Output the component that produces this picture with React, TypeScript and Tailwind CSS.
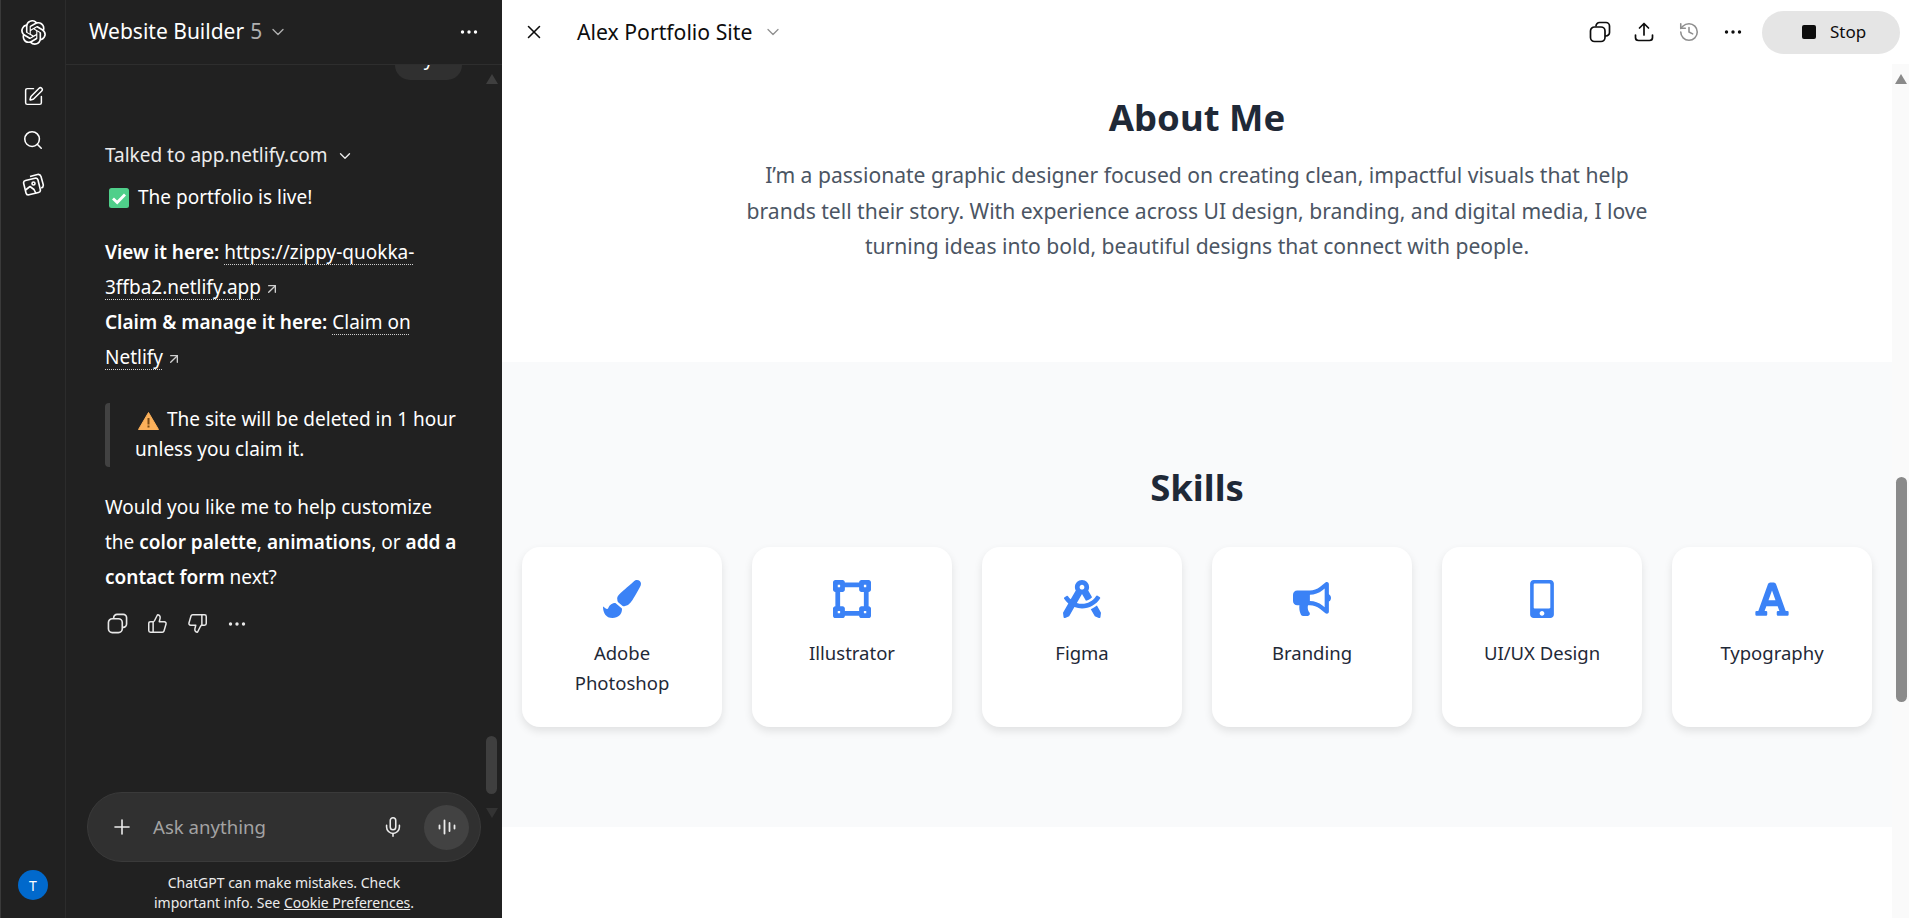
import React from "react";
import { ArrowUpRight, ChevronDown, History, Mic, Plus, Search, SquarePen, ThumbsDown, ThumbsUp, X } from "lucide-react";
import { FaBullhorn, FaDraftingCompass, FaFont, FaMobileAlt, FaPaintBrush, FaVectorSquare } from "react-icons/fa";
import { SiOpenai } from "react-icons/si";

const skills = [
  { name: "Adobe Photoshop", Icon: FaPaintBrush },
  { name: "Illustrator", Icon: FaVectorSquare },
  { name: "Figma", Icon: FaDraftingCompass },
  { name: "Branding", Icon: FaBullhorn },
  { name: "UI/UX Design", Icon: FaMobileAlt },
  { name: "Typography", Icon: FaFont },
];

function Dots() {
  return (
    <svg width="20" height="20" viewBox="0 0 20 20" fill="currentColor">
      <circle cx="3.5" cy="10" r="1.7" />
      <circle cx="10" cy="10" r="1.7" />
      <circle cx="16.5" cy="10" r="1.7" />
    </svg>
  );
}

function CopyIcon({ size = 22 }: { size?: number }) {
  return (
    <svg width={size} height={size} viewBox="0 0 22 22" fill="none" stroke="currentColor" strokeWidth="1.7">
      <rect x="1.5" y="6" width="14.5" height="14.5" rx="4" />
      <path d="M7 5.5V5a3.5 3.5 0 0 1 3.5-3.5H17A3.5 3.5 0 0 1 20.500 5v6.500A3.500 3.500 0 0 1 17 15h-1" />
    </svg>
  );
}

function ShareIcon() {
  return (
    <svg width="22" height="22" viewBox="0 0 22 22" fill="none" stroke="currentColor" strokeWidth="1.7" strokeLinecap="round" strokeLinejoin="round">
      <path d="M11 14V2.500M6.500 7 11 2.500 15.500 7" />
      <path d="M2.500 14v2.500a3 3 0 0 0 3 3h11a3 3 0 0 0 3-3V14" />
    </svg>
  );
}

function ImagesIcon() {
  return (
    <svg width="23" height="23" viewBox="0 0 23 23" fill="none" stroke="currentColor" strokeWidth="1.6" strokeLinejoin="round">
      <path d="M3.500 7.500 13 5.200a2.500 2.500 0 0 1 3 1.800l2.300 9.500a2.500 2.500 0 0 1-1.800 3L7 21.800a2.500 2.500 0 0 1-3-1.800L1.700 10.500a2.500 2.500 0 0 1 1.800-3Z" />
      <path d="M8 3.500 15.500 1.500a3 3 0 0 1 3.500 2l2.200 8a3 3 0 0 1-2 3.500" />
      <circle cx="11.500" cy="10.500" r="1.500" />
      <path d="M3.500 17 8 13.500l4 3 2 4" />
    </svg>
  );
}

function VoiceBars() {
  return (
    <svg width="20" height="20" viewBox="0 0 20 20" fill="none" stroke="currentColor" strokeWidth="1.8" strokeLinecap="round">
      <path d="M2.500 8.500v3M7.500 3.500v13M12.500 6v8M17.500 8.500v3" />
    </svg>
  );
}

function CheckEmoji() {
  return (
    <svg width="20" height="20" viewBox="0 0 20 20" className="shrink-0">
      <rect width="20" height="20" rx="2.500" fill="#4fcf8a" />
      <path d="M4 10.500 8.200 14.500 16 6.500" fill="none" stroke="#fff" strokeWidth="2.800" />
    </svg>
  );
}

function WarningEmoji() {
  return (
    <svg width="21" height="18" viewBox="0 0 21 18" className="inline-block ml-[3px]">
      <path d="M10.500 0.500 20.500 17.500H0.500Z" fill="#fbb05a" stroke="#fbb05a" strokeLinejoin="round" />
      <rect x="9.500" y="6" width="2" height="6.500" fill="#7a4a14" />
      <rect x="9.500" y="13.500" width="2" height="2" fill="#7a4a14" />
    </svg>
  );
}

function ChatLink({ children }: { children: React.ReactNode }) {
  return <span className="underline decoration-dotted decoration-1 underline-offset-[5px] decoration-[#cfcfcf]">{children}</span>;
}

function Rail() {
  return (
    <div className="w-[66px] shrink-0 flex flex-col items-center border-r border-[#2c2c2c] border-l border-l-[#3a3a3a] pb-[18px]">
      <div className="h-[64px] flex items-center justify-center">
        <SiOpenai size={25} />
      </div>
      <div className="mt-[22px] flex flex-col items-center gap-[22px]">
        <SquarePen size={21} strokeWidth={1.7} />
        <Search size={22} strokeWidth={1.7} />
        <ImagesIcon />
      </div>
      <div className="mt-auto w-[30px] h-[30px] rounded-full bg-[#0169cc] flex items-center justify-center text-[14px]">T</div>
    </div>
  );
}

function ChatPanel() {
  return (
    <div className="relative w-[436px] shrink-0 flex flex-col">
      <div className="h-[65px] shrink-0 flex items-center justify-between pl-[23px] pr-[23px] border-b border-[#2e2e2e] z-10 bg-[#212121]">
        <div className="flex items-center text-[21px]">
          <span>Website Builder</span>
          <span className="ml-[6px] text-[#afafaf]">5</span>
          <ChevronDown size={20} strokeWidth={1.6} className="ml-[6px] text-[#afafaf]" />
        </div>
        <Dots />
      </div>

      <div className="flex-1 overflow-hidden pl-[39px] pr-[20px] text-[19px] leading-[35px]">
        <div className="flex justify-end pr-[20px]">
          <div className="w-[67px] h-[15px] bg-[#303030] rounded-b-[20px] overflow-hidden flex justify-center">
            <span className="-mt-[19px] leading-[25px]">y</span>
          </div>
        </div>
        <div className="mt-[58px] flex items-center h-[35px] text-[#ececec]">
          Talked to app.netlify.com
          <ChevronDown size={18} strokeWidth={1.8} className="ml-[8px]" />
        </div>
        <div className="mt-[7px] flex items-center gap-[9px] h-[35px] pl-[4px]">
          <CheckEmoji />
          The portfolio is live!
        </div>
        <p className="mt-[20px]">
          <strong className="font-semibold">View it here:</strong> <ChatLink>https://zippy-quokka-<br />3ffba2.netlify.app</ChatLink>
          <ArrowUpRight size={16} strokeWidth={2} className="inline-block ml-[3px] text-[#cfcfcf]" />
          <br />
          <strong className="font-semibold">Claim &amp; manage it here:</strong> <ChatLink>Claim on<br />Netlify</ChatLink>
          <ArrowUpRight size={16} strokeWidth={2} className="inline-block ml-[3px] text-[#cfcfcf]" />
        </p>
        <blockquote className="mt-[28px] border-l-[5px] rounded-sm border-[#424242] pl-[25px] leading-[30px] pt-[1px] pb-[3px]">
          <WarningEmoji /> <span className="ml-[3px]">The site will be deleted in 1 hour</span>
          <br />
          unless you claim it.
        </blockquote>
        <p className="mt-[23px]">
          Would you like me to help customize
          <br />
          the <strong className="font-semibold">color palette</strong>, <strong className="font-semibold">animations</strong>, or <strong className="font-semibold">add a</strong>
          <br />
          <strong className="font-semibold">contact form</strong> next?
        </p>
        <div className="mt-[18px] flex items-center gap-[19px] pl-[2px] text-[#e8e8e8]">
          <CopyIcon size={21} />
          <ThumbsUp size={21} strokeWidth={1.7} />
          <ThumbsDown size={21} strokeWidth={1.7} />
          <Dots />
        </div>
      </div>

      <div className="pl-[21px] pr-[21px] pb-[5px] text-center text-[14px] leading-[20px] text-[#ececec]">
        <div className="h-[70px] rounded-full bg-[#303030] border border-[#3a3a3a] flex items-center pl-[22px] pr-[11px] mb-[11px]">
          <Plus size={24} strokeWidth={1.6} />
          <span className="ml-[19px] text-[18.6px] text-[#a3a3a3]">Ask anything</span>
          <Mic size={22} strokeWidth={1.7} className="ml-auto mr-[20px]" />
          <div className="w-[45px] h-[45px] rounded-full bg-[#424242] flex items-center justify-center">
            <VoiceBars />
          </div>
        </div>
        ChatGPT can make mistakes. Check
        <br />
        important info. See <span className="underline">Cookie Preferences</span>.
      </div>

      {/* native looking scrollbar over the chat */}
      <div className="absolute right-[4px] top-[74px] w-0 h-0 border-x-[6.500px] border-x-transparent border-b-[10px] border-b-[#3f3f3f]" />
      <div className="absolute right-[5px] top-[736px] w-[11px] h-[58px] rounded-md bg-[#3f3f3f]" />
      <div className="absolute right-[4px] top-[808px] w-0 h-0 border-x-[6.500px] border-x-transparent border-t-[10px] border-t-[#333333]" />
    </div>
  );
}

function PreviewPanel() {
  return (
    <div className="flex-1 min-w-0 bg-white text-[#0d0d0d] flex flex-col">
      <div className="h-[64px] shrink-0 flex items-center pl-[21px] pr-[9px]">
        <X size={22} strokeWidth={1.7} />
        <span className="ml-[32px] text-[21.2px] leading-none">Alex Portfolio Site</span>
        <ChevronDown size={20} strokeWidth={1.5} className="ml-[11px] text-[#8f8f8f]" />
        <div className="ml-auto flex items-center">
          <CopyIcon />
          <span className="ml-[22px]"><ShareIcon /></span>
          <History size={22} strokeWidth={1.7} className="ml-[23px] text-[#8f8f8f]" />
          <span className="ml-[23px]"><Dots /></span>
          <div className="ml-[19px] w-[138px] h-[43px] rounded-full bg-[#e5e5e5] flex items-center pl-[40px] text-[17px]">
            <div className="w-[14px] h-[14px] rounded-[2px] bg-[#0d0d0d]" />
            <span className="ml-[14px]">Stop</span>
          </div>
        </div>
      </div>

      <div className="flex-1 flex min-h-0">
        <div className="flex-1 min-w-0 overflow-hidden">
          <div className="h-[298px] pt-[27px] text-center">
            <h2 className="text-[36.5px] leading-[52px] font-bold text-[#1f2937]">About Me</h2>
            <p className="mt-[14px] text-[21.1px] leading-[35.500px] text-[#4b5563]">
              I’m a passionate graphic designer focused on creating clean, impactful visuals that help
              <br />
              brands tell their story. With experience across UI design, branding, and digital media, I love
              <br />
              turning ideas into bold, beautiful designs that connect with people.
            </p>
          </div>
          <section className="h-[465px] bg-[#f9fafb] pt-[99px] px-[20px]">
            <h2 className="text-[36.5px] leading-[52px] font-bold text-center text-[#1f2937]">Skills</h2>
            <div className="mt-[34px] grid grid-cols-6 gap-[30px]">
              {skills.map(({ name, Icon }) => (
                <div key={name} className="h-[180px] rounded-[18px] bg-white shadow-[0_4px_8px_rgba(0,0,0,0.1)] pt-[33px] px-[26px] flex flex-col items-center text-center text-[18.5px] leading-[30px] text-[#1f2937]">
                  <Icon size={38} className="text-[#3b82f6] shrink-0" />
                  <div className="mt-[20px]">{name}</div>
                </div>
              ))}
            </div>
          </section>
        </div>

        {/* page scrollbar */}
        <div className="relative w-[17px] shrink-0 bg-[#fafafa]">
          <div className="absolute left-[3px] top-[10px] w-0 h-0 border-x-[6.500px] border-x-transparent border-b-[10px] border-b-[#8a8a8a]" />
          <div className="absolute left-[4px] top-[413px] w-[11px] h-[225px] rounded-md bg-[#8a8a8a]" />
        </div>
      </div>
    </div>
  );
}

export default function App() {
  return (
    <div className="w-[1909px] h-[918px] flex overflow-hidden bg-[#212121] text-white font-['Noto_Sans',sans-serif]">
      <Rail />
      <ChatPanel />
      <PreviewPanel />
    </div>
  );
}
